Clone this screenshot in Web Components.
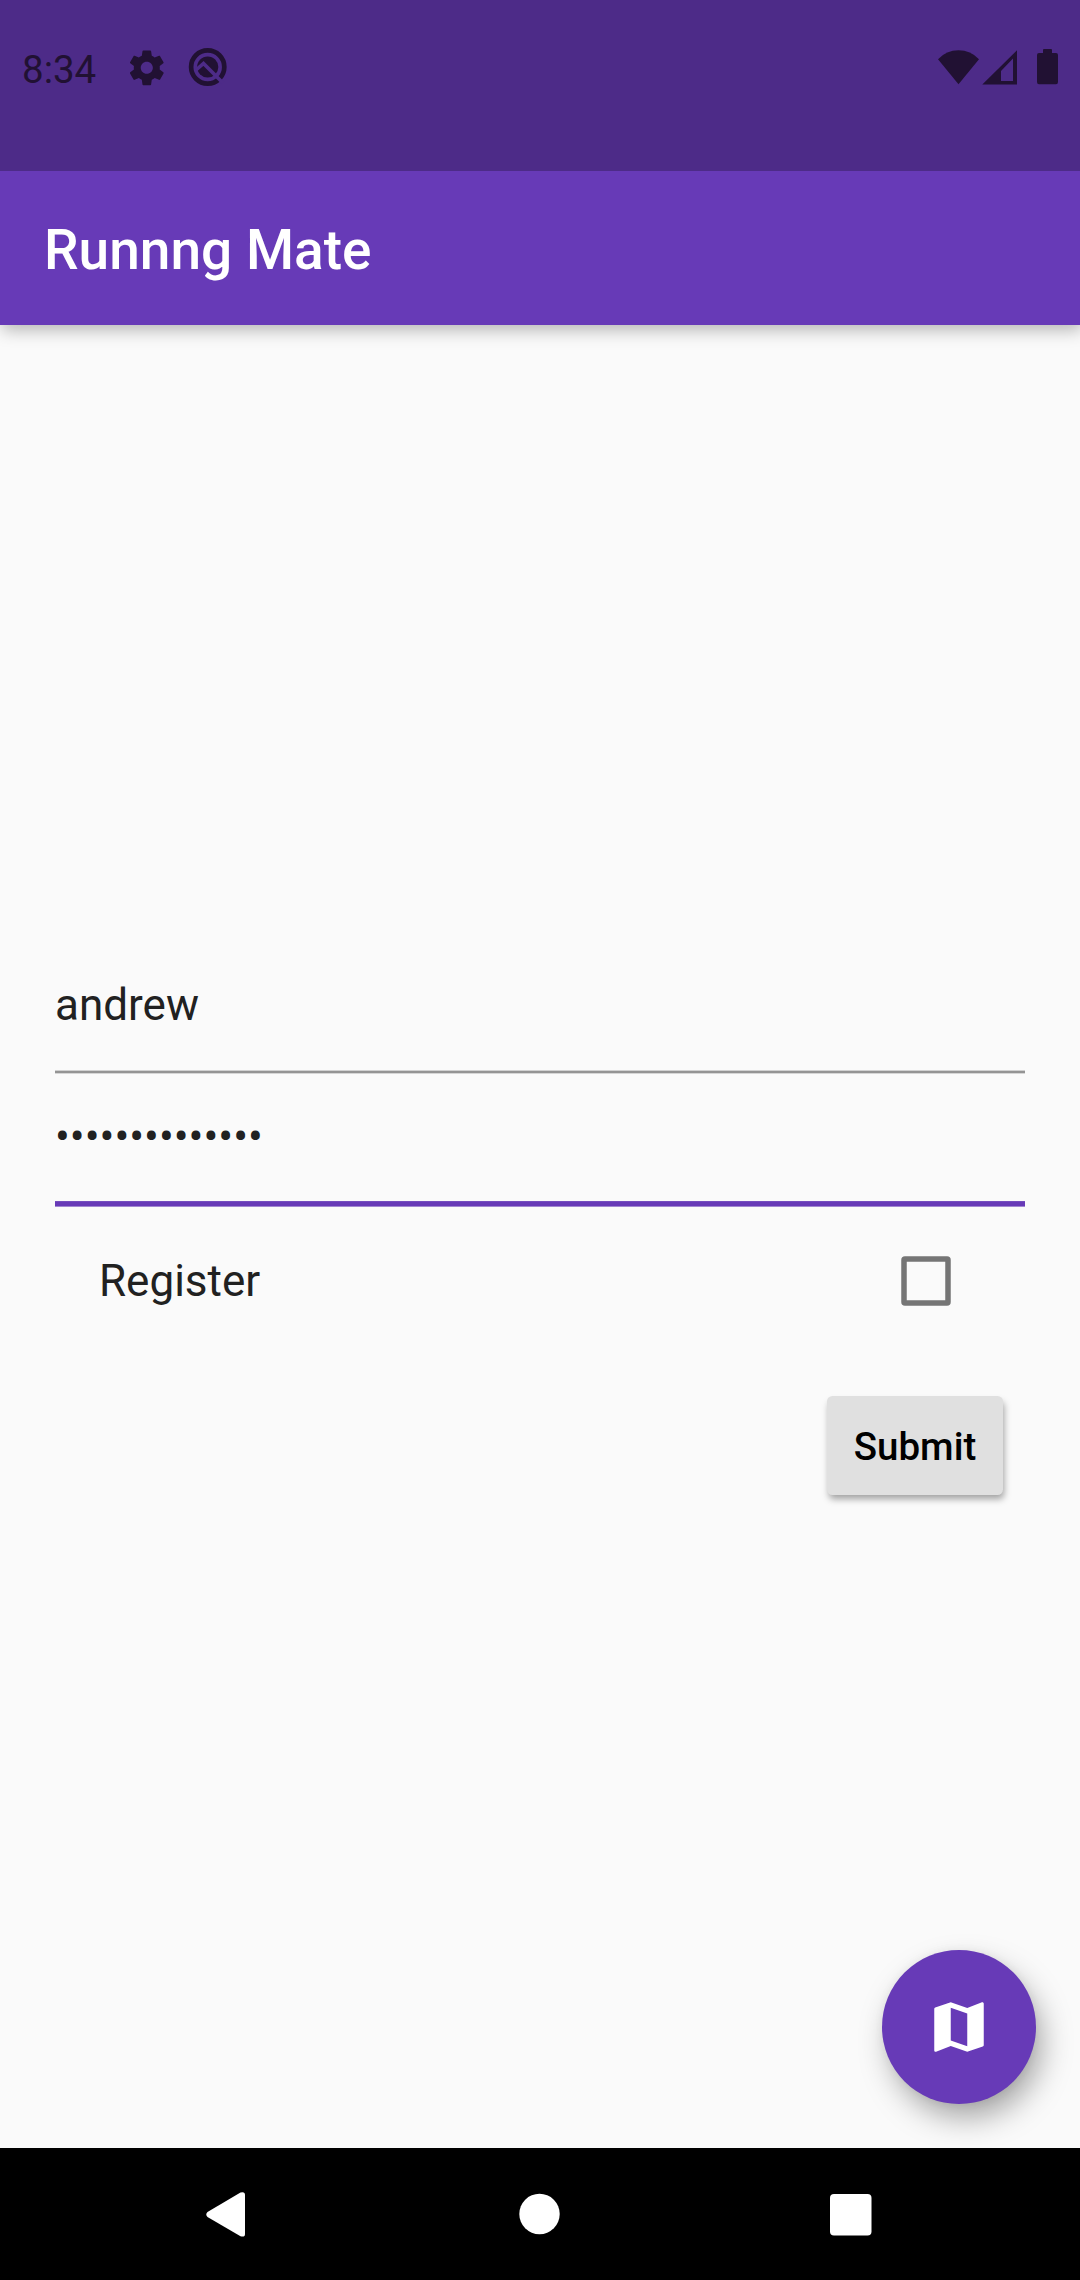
<!DOCTYPE html>
<html lang="en">
<head>
<meta charset="utf-8">
<title>Runnng Mate</title>
<style>
html,body{margin:0;padding:0}
body{width:1080px;height:2280px;overflow:hidden;background:#fafafa;font-family:Roboto,sans-serif}
</style>
</head>
<body>
<login-screen></login-screen>
<script>
function define(name, html) {
  const template = document.createElement('template');
  template.innerHTML = html;
  customElements.define(name, class extends HTMLElement {
    constructor() {
      super();
      this.attachShadow({mode: 'open'}).appendChild(template.content.cloneNode(true));
    }
  });
}

define('status-bar', `
<style>
:host{display:flex;box-sizing:border-box;height:171px;background:#4d2b88;color:#211133;padding:45px 20px 0 22px;align-items:flex-start}
.time{font-size:38.5px;line-height:45px;padding-top:2px;width:104px;white-space:nowrap}
svg{display:block;fill:currentColor}
.right{margin-left:auto;display:flex}
.gear{margin-top:1.5px}
.q{margin-left:18px;margin-top:2px}
</style>
<div class="time">8:34</div>
<svg class="gear" width="41.6" height="41.6" viewBox="0 0 24 24"><path d="M19.43 12.98c.04-.32.07-.64.07-.98s-.03-.66-.07-.98l2.11-1.65c.19-.15.24-.42.12-.64l-2-3.46c-.12-.22-.39-.3-.61-.22l-2.49 1c-.52-.4-1.08-.73-1.69-.98l-.38-2.65C14.46 2.18 14.25 2 14 2h-4c-.25 0-.46.18-.49.42l-.38 2.65c-.61.25-1.17.59-1.69.98l-2.49-1c-.23-.09-.49 0-.61.22l-2 3.46c-.13.22-.07.49.12.64l2.11 1.65c-.04.32-.07.65-.07.98s.03.66.07.98l-2.11 1.65c-.19.15-.24.42-.12.64l2 3.46c.12.22.39.3.61.22l2.49-1c.52.4 1.08.73 1.69.98l.38 2.65c.03.24.24.42.49.42h4c.25 0 .46-.18.49-.42l.38-2.65c.61-.25 1.17-.59 1.69-.98l2.49 1c.23.09.49 0 .61-.22l2-3.46c.12-.22.07-.49-.12-.64l-2.11-1.65zM12 15.5c-1.93 0-3.5-1.57-3.5-3.5s1.57-3.5 3.5-3.5 3.5 1.57 3.5 3.5-1.57 3.5-3.5 3.5z"/></svg>
<svg class="q" width="44" height="40" viewBox="0 0 44 40"><circle cx="21.7" cy="20" r="16.6" fill="none" stroke="currentColor" stroke-width="4.7"/><circle cx="21.7" cy="20" r="10.6"/><path d="M10 23L17.5 16.5L37 36" fill="none" stroke="#4d2b88" stroke-width="3.6"/></svg>
<div class="right"><svg width="122" height="45" viewBox="938 45 122 45">
<path d="M958.5 84.3L938 59.2Q946.5 50.3 958.5 50.3T979 59.2Z"/>
<path fill-rule="evenodd" d="M982.3 84.6L1017 50.3V84.6ZM1001 71V81H1013V58.5Z"/>
<path d="M1043 53V50Q1043 49 1044 49H1051Q1052 49 1052 50V53H1056Q1058 53 1058 55V82Q1058 84.3 1056 84.3H1039Q1037 84.3 1037 82V55Q1037 53 1039 53Z"/>
</svg></div>`);

define('app-bar', `
<style>
:host{display:flex;box-sizing:border-box;height:154px;align-items:center;padding:3px 44px 0;background:#673ab7;color:#fff;font-size:55px;font-weight:500;line-height:64px;white-space:nowrap;box-shadow:2px 5px 16px rgba(0,0,0,.28);clip-path:inset(0 0 -60px 0)}
</style><slot></slot>`);

define('check-row', `
<style>
:host{display:flex;align-items:center;justify-content:space-between;color:#212121;font-size:44px;line-height:52px}
svg{display:block}
</style><span><slot></slot></span>
<svg width="50" height="50" viewBox="0 0 50 50"><rect x="3" y="3" width="44" height="44" rx="1" fill="none" stroke="#757575" stroke-width="5.5"/></svg>`);

define('raised-button', `
<style>
:host{display:flex;box-sizing:border-box;width:176px;height:99px;align-items:center;justify-content:center;padding-top:2px;border-radius:5.5px;background:#e0e0e0;color:#000;font-size:38.5px;font-weight:500;line-height:46px;box-shadow:1.5px 5px 7px -1px rgba(0,0,0,.36)}
</style><slot></slot>`);

define('map-button', `
<style>
:host{display:flex;width:154px;height:154px;border-radius:50%;background:#673ab7;align-items:center;justify-content:center;box-shadow:7px 15px 32px -3px rgba(0,0,0,.38),0 0 10px rgba(0,0,0,.05)}
svg{display:block}
</style>
<svg width="66" height="66" viewBox="0 0 24 24" fill="#fff"><path d="M20.5 3l-.16.03L15 5.1 9 3 3.36 4.9c-.21.07-.36.25-.36.48V20.5c0 .28.22.5.5.5l.16-.03L9 18.9l6 2.1 5.64-1.9c.21-.07.36-.25.36-.48V3.5c0-.28-.22-.5-.5-.5zM15 19l-6-2.11V5l6 2.11V19z"/></svg>`);

define('nav-bar', `
<style>
:host{display:flex;box-sizing:border-box;height:132px;background:#000;position:relative;padding:42px 208px 0 205px;justify-content:space-between}
svg{display:block;fill:#fff}
</style>
<svg width="42" height="48" viewBox="0 0 42 48"><path d="M2.5 22L35.5 2.5Q40 1.2 40 5V44Q40 47.5 35.5 46.3L2.5 27Q0 24.5 2.5 22Z"/></svg>
<svg width="42" height="48" viewBox="0 0 42 48"><circle cx="21.5" cy="24" r="20.2"/></svg>
<svg width="42" height="48" viewBox="0 0 42 48"><rect x="0" y="4" width="41.5" height="41.5" rx="4"/></svg>`);

define('field-line', `
<style>:host{display:block;height:8px}svg{display:block;width:970px;height:8px}.active{display:none}:host([active]) .active{display:block}:host([active]) .idle{display:none}</style>
<svg class="idle"><rect y="2.6" width="970" height="2.75" fill="#949494"/></svg>
<svg class="active"><rect y="2.1" width="970" height="5.5" fill="#673ab7"/></svg>`);

define('field-text', `
<style>:host{display:block;color:#212121;font-size:44px;line-height:52px;white-space:nowrap}</style><slot></slot>`);

define('login-screen', `
<style>
:host{display:flex;flex-direction:column;width:1080px;height:2280px;background:#fafafa}
main{flex:1;display:flex;flex-direction:column;padding:654px 55px 0}
.u{margin-top:37px}
.p{margin-top:35px}
.a{margin-top:36px}
check-row{margin:44px 74px 0 44px;height:60px}
raised-button{align-self:flex-end;margin:85px 22px 0 0}
map-button{align-self:flex-end;margin:455px -11px 0 0}
</style>
<status-bar></status-bar>
<app-bar>Runnng Mate</app-bar>
<main>
<field-text>andrew</field-text>
<field-line class="u"></field-line>
<field-text class="p">••••••••••••••</field-text>
<field-line class="a" active></field-line>
<check-row>Register</check-row>
<raised-button>Submit</raised-button>
<map-button></map-button>
</main>
<nav-bar></nav-bar>`);
</script>
</body>
</html>
